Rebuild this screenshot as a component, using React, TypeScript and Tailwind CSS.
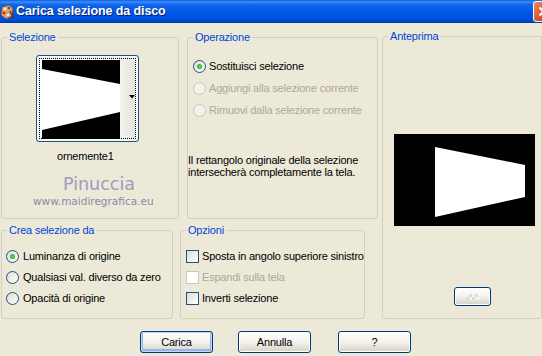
import clsx from "clsx";
import type { ReactNode } from "react";

// XP-styled "load selection from disk" dialog (Luna theme look)

function Group({ label, className, children }: { label: string; className?: string; children?: ReactNode }) {
  return (
    <div className={clsx("relative shrink-0 rounded-[3px] border border-[#D0D0BF]", className)}>
      <span className="absolute -top-[7px] left-[5px] bg-[#ECE9D8] px-[2px] text-[11px] leading-[13px] text-[#0046D5]">
        {label}
      </span>
      {children}
    </div>
  );
}

function Radio({ checked, disabled }: { checked?: boolean; disabled?: boolean }) {
  return (
    <span
      className={clsx(
        "flex h-[13px] w-[13px] shrink-0 items-center justify-center rounded-full border",
        disabled ? "border-[#CAC8BB] bg-[#F3F2EA]" : "border-[#1C5180] bg-linear-to-br from-[#DCDCD7] to-white"
      )}
    >
      {checked && <span className="h-[5px] w-[5px] rounded-full bg-radial from-[#63D963] to-[#1E9A1E]" />}
    </span>
  );
}

function Check({ disabled }: { disabled?: boolean }) {
  return (
    <span
      className={clsx(
        "h-[13px] w-[13px] shrink-0 border",
        disabled ? "border-[#CAC8BB] bg-white" : "border-[#1C5180] bg-linear-to-br from-[#DCDCD7] to-white"
      )}
    />
  );
}

function Row({ control, label, disabled, gap = "gap-[3px]" }: { control: ReactNode; label: string; disabled?: boolean; gap?: string }) {
  return (
    <div className={clsx("flex h-[13px] items-center whitespace-nowrap", gap, disabled ? "text-[#ACA899]" : "text-black")}>
      {control}
      <span className="leading-[13px]">{label}</span>
    </div>
  );
}

function XPButton({
  children,
  isDefault,
  small,
  className,
}: {
  children?: ReactNode;
  isDefault?: boolean;
  small?: boolean;
  className?: string;
}) {
  return (
    <button
      type="button"
      className={clsx(
        "flex shrink-0 items-center justify-center rounded-[3px] border border-[#003C74] bg-linear-to-b from-white via-[#F3F2EC] to-[#D8D2C5] text-[11px] text-black",
        small ? "h-[19px] w-[37px]" : "h-[22px] w-[73px]",
        isDefault ? "shadow-[inset_0_0_0_1px_#C4D6F5,inset_0_-1px_0_2px_#98B4E6]" : "shadow-[inset_0_0_0_1px_#FFFFFF]",
        className
      )}
    >
      {children}
    </button>
  );
}

function TitleIcon() {
  return (
    <svg width="15" height="16" viewBox="0 0 15 16" className="shrink-0">
      <path d="M2 3 L9 1 L13 4 L12 12 L6 15 L1 11 Z" fill="#E0A060" stroke="#7A4A20" strokeWidth="0.8" />
      <circle cx="5" cy="5" r="1.4" fill="#FFFFFF" />
      <circle cx="9" cy="4" r="1.3" fill="#2A60D0" />
      <circle cx="4" cy="9" r="1.3" fill="#C02020" />
      <circle cx="8" cy="11" r="1.3" fill="#F0E8D0" />
      <path d="M10 7 L14 15" stroke="#5A3A1A" strokeWidth="1.4" />
    </svg>
  );
}

export default function App() {
  return (
    <div className="h-[356px] w-[542px] overflow-hidden bg-[#ECE9D8] font-['Liberation_Sans',Tahoma,Arial,sans-serif] text-[11px] tracking-[-0.2px] text-black">
      {/* title bar */}
      <div className="flex h-[23px] items-center bg-[linear-gradient(180deg,#0A5BE4_0%,#3E8EF6_8%,#1264EA_20%,#0058E6_50%,#0052DE_80%,#0042C4_96%,#00379E_100%)]">
        <TitleIcon />
        <span className="ml-[1px] font-['Liberation_Sans',Arial,sans-serif] text-[12.5px] font-bold tracking-[-0.1px] text-white [text-shadow:1px_1px_0_#0A1F6E]">
          Carica selezione da disco
        </span>
        <div className="ml-auto mr-[-12px] flex h-[21px] w-[21px] items-center justify-center rounded-[3px] border border-white bg-linear-to-br from-[#E9896A] via-[#DA5A33] to-[#B83A16]">
          <svg width="11" height="11" viewBox="0 0 11 11">
            <path d="M1.5 1.5 L9.5 9.5 M9.5 1.5 L1.5 9.5" stroke="white" strokeWidth="2" />
          </svg>
        </div>
      </div>

      {/* body */}
      <div className="flex pl-[1px] pt-[13px]">
        <div className="mt-[1px] flex flex-col">
          <div className="flex">
            <Group label="Selezione" className="h-[182px] w-[178px]">
              <div className="ml-[34px] mt-[17px] h-[87px] w-[103px] rounded-[3px] border border-[#1C5180] bg-[#F7F7F4] p-[2px]">
                <div className="flex h-full w-full border border-dotted border-black">
                  <div className="w-[2px] bg-white" />
                  <svg width="78" height="79" viewBox="0 0 78 79" className="mt-[1px] shrink-0">
                    <rect width="78" height="79" fill="#000" />
                    <polygon points="0,9 78,24 78,52 0,70" fill="#fff" />
                  </svg>
                  <div className="relative flex-1 bg-linear-to-r from-[#F4F4F0] to-[#E4E4DE]">
                    <svg width="6" height="4" viewBox="0 0 6 4" className="absolute right-[0px] top-[36px]">
                      <path d="M0 0 H6 L3 3.5 Z" fill="#000" />
                    </svg>
                  </div>
                </div>
              </div>
              <div className="ml-[55px] mt-[8px] leading-[13px]">ornemente1</div>
              <div className="ml-[61px] mt-[11px] font-['DejaVu_Sans',sans-serif] text-[17.5px] font-medium leading-[20px] tracking-normal text-[#9C9CBE]">
                Pinuccia
              </div>
              <div className="ml-[31px] mt-[1px] font-['DejaVu_Sans',sans-serif] text-[10.5px] leading-[12px] tracking-normal text-[#8A8AA6]">
                www.maidiregrafica.eu
              </div>
            </Group>

            <Group label="Operazione" className="ml-[8px] h-[182px] w-[191px]">
              <div className="ml-[5px] mt-[22px] flex flex-col gap-[9px]">
                <Row control={<Radio checked />} label="Sostituisci selezione" />
                <Row control={<Radio disabled />} label="Aggiungi alla selezione corrente" disabled />
                <Row control={<Radio disabled />} label="Rimuovi dalla selezione corrente" disabled />
              </div>
              <p className="ml-[0px] mt-[37px] leading-[12px]">
                Il rettangolo originale della selezione
                <br />
                intersecherà completamente la tela.
              </p>
            </Group>
          </div>

          <div className="mt-[11px] flex">
            <Group label="Crea selezione da" className="h-[89px] w-[172px]">
              <div className="ml-[4px] mt-[19px] flex flex-col gap-[8px]">
                <Row control={<Radio checked />} label="Luminanza di origine" gap="gap-[4px]" />
                <Row control={<Radio />} label="Qualsiasi val. diverso da zero" gap="gap-[4px]" />
                <Row control={<Radio />} label="Opacità di origine" gap="gap-[4px]" />
              </div>
            </Group>

            <Group label="Opzioni" className="ml-[7px] h-[89px] w-[185px]">
              <div className="ml-[5px] mt-[19px] flex flex-col gap-[8px]">
                <Row control={<Check />} label="Sposta in angolo superiore sinistro" />
                <Row control={<Check disabled />} label="Espandi sulla tela" disabled />
                <Row control={<Check />} label="Inverti selezione" />
              </div>
            </Group>
          </div>
        </div>

        <Group label="Anteprima" className="ml-[4px] h-[283px] w-[160px]">
          <svg width="141" height="92" viewBox="0 0 141 92" className="ml-[11px] mt-[97px] block">
            <rect width="141" height="92" fill="#000" />
            <polygon points="41,13 131,31 131,63 41,83" fill="#fff" />
          </svg>
          <XPButton small className="ml-[71px] mt-[61px]">
            <svg width="14" height="6" viewBox="0 0 14 6">
              <rect x="0" y="0" width="14" height="6" fill="#F2F2F2" />
              <rect x="3" y="0" width="3" height="3" fill="#DADADA" />
              <rect x="9" y="0" width="3" height="3" fill="#DADADA" />
              <rect x="0" y="3" width="3" height="3" fill="#DADADA" />
              <rect x="6" y="3" width="3" height="3" fill="#DADADA" />
            </svg>
          </XPButton>
        </Group>
      </div>

      {/* buttons */}
      <div className="mt-[12px] flex pl-[140px]">
        <XPButton isDefault>Carica</XPButton>
        <XPButton className="ml-[25px]">Annulla</XPButton>
        <XPButton className="ml-[27px]">?</XPButton>
      </div>
    </div>
  );
}
